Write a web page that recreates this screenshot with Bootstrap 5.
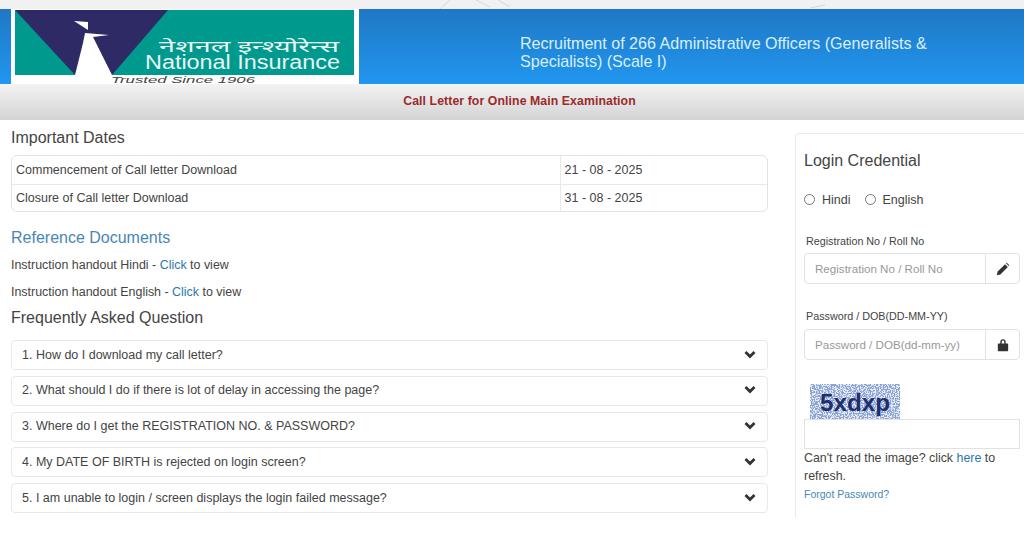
<!DOCTYPE html>
<html lang="en"><head><meta charset="utf-8"><title>Call Letter</title>
<link rel="stylesheet" href="https://cdn.jsdelivr.net/npm/bootstrap@5.3.0/dist/css/bootstrap.min.css">
<style>
html,body{height:536px;overflow:hidden}
body{font-family:"Liberation Sans",Arial,sans-serif;color:#444;background:#fff;font-size:13px}
.topstrip{height:9px;background:#f1f1f1;overflow:hidden}
.topstrip svg{display:block}
.hdr{height:75px;background:linear-gradient(#1f78c4,#2196f0)}
.logobox{width:348px;margin-left:11px;background:#fff;padding:1px 4px 0;flex:none;height:75px}
.logosvg{display:block;width:339px;height:74px;overflow:visible}
.hdrtitle{margin-left:161px;width:470px;color:#d8f0fb;font-size:16.1px;line-height:18px;padding-top:11px}
.band{height:36px;background:linear-gradient(#f3f3f3,#d4d4d4);color:#9c2a2a;font-weight:700;font-size:12.25px;letter-spacing:.1px;padding:0 0 2px 15px}
.leftcol{width:757px;margin-left:11px;flex:none}
.rightcol{width:229px;margin:13px 0 0 27px;flex:none;height:384px;border:1px solid #e9e9e9;border-right:0;border-bottom:0;border-radius:4px 0 0 0;padding:15px 4px 0 8px}
.h-dates{font-size:16px;line-height:18px;color:#444;margin:9px 0 8px;font-weight:400}
.datebox{border:1px solid #e2e2e2;border-radius:6px;height:57px;overflow:hidden}
.datebox .table{margin:0;--bs-table-color:#444;font-size:12.5px}
.datebox td{padding:0 4px;height:28px;vertical-align:middle;border-color:#e8e8e8;color:#444}
.datebox tr:first-child td{padding-top:1px}
.datebox tr:last-child td{border-bottom:0}
.c1{width:548px;border-right:1px solid #e8e8e8}
.h-ref{font-size:16px;line-height:18px;color:#4a86b4;margin:17px 0 0;font-weight:400}
.reftext{font-size:12.45px;line-height:14px;margin:13px 0 0;color:#444}
.reftext.first{margin-top:11px}
.linkb{color:#2b78ad;text-decoration:none}
.h-faq{font-size:16px;line-height:18px;color:#444;margin:10px 0 13px;font-weight:400}
.faqs{gap:5.75px}
.faq{height:30px;border:1px solid #e8e8e8;border-radius:4px;padding:0 11px 0 10px;font-size:12.5px;color:#444}
.faq svg{width:12px;height:9px;flex:none;margin-top:-2px}
.h-login{font-size:16px;line-height:18px;margin:3px 0 23px;font-weight:400;color:#444}
.langs{font-size:12.5px;line-height:14px;gap:14px;margin-bottom:28px}
.radiodot{width:11px;height:11px;border:1px solid #777;border-radius:50%;background:#fff;display:inline-block;margin-right:7px;vertical-align:-1px}
.fldlabel{font-size:10.75px;line-height:12px;margin:0 0 7px 2px;color:#444}
.fldlabel.tight{margin-bottom:6px}
.fldgroup{height:31px;width:216px;margin-bottom:25px}
.fldgroup.loose{margin-bottom:26px}
.fldgroup .form-control{font-size:11.6px;border-color:#e2e2e2;border-radius:4px 0 0 4px;padding:0 10px;height:31px;color:#444;box-shadow:none}
.fldgroup .form-control::placeholder{color:#999}
.fldgroup .input-group-text{width:35px;justify-content:center;background:#fff;border-color:#e2e2e2;padding:0;border-radius:0 4px 4px 0;margin-left:-1px}
.fldgroup svg{width:14px;height:14px}
.captcha{display:block;width:90px;height:35px;margin:-1px 0 0 6px}
.captchain{width:216px;height:30px;border:1px solid #e2e2e2;display:block}
.refresh{font-size:12.4px;line-height:18px;margin:0;color:#444}
.forgot{font-size:10.5px;line-height:14px;color:#4a86b4;text-decoration:none;display:block;margin-top:2px}
</style></head><body>
<div class="topstrip"><svg width="1024" height="9" viewBox="0 0 1024 9" fill="none" stroke="#d6d6d6"><path d="M440 9L450 0M476 0L490 7M498 0L510 7M810 8L825 5"/></svg></div>
<div class="hdr d-flex">
 <div class="logobox">
  <svg class="logosvg" viewBox="0 0 339 74" role="img" aria-label="National Insurance">
   <rect width="339" height="65" fill="#00998e"/>
   <polygon points="0,0 153,0 97,65 60,65" fill="#2e2a66"/>
   <polygon points="60,65 68,33 70,23 94,25 78,27 97,65" fill="#fff"/>
   <polygon points="59,11 73,12 73,20" fill="#fff"/>
   <text x="144" y="42" fill="#e8f5f3" font-size="16" font-family="'Noto Sans','Liberation Sans',sans-serif" textLength="180" lengthAdjust="spacingAndGlyphs">नेशनल इन्श्योरेन्स</text>
   <text x="130" y="59" fill="#e8f5f3" font-size="19.5" font-family="'Liberation Sans',sans-serif" textLength="195" lengthAdjust="spacingAndGlyphs">National Insurance</text>
   <text x="96" y="73" fill="#444" font-size="8.5" font-style="italic" font-family="'Liberation Sans',sans-serif" textLength="144" lengthAdjust="spacingAndGlyphs">Trusted Since 1906</text>
  </svg>
 </div>
 <div class="hdrtitle d-flex align-items-center">Recruitment of 266 Administrative Officers (Generalists &amp; Specialists) (Scale I)</div>
</div>
<div class="band d-flex align-items-center justify-content-center">Call Letter for Online Main Examination</div>
<div class="d-flex">
 <div class="leftcol">
  <h2 class="h-dates">Important Dates</h2>
  <div class="datebox"><table class="table"><tbody>
   <tr><td class="c1">Commencement of Call letter Download</td><td>21 - 08 - 2025</td></tr>
   <tr><td class="c1">Closure of Call letter Download</td><td>31 - 08 - 2025</td></tr>
  </tbody></table></div>
  <h2 class="h-ref">Reference Documents</h2>
  <p class="reftext first">Instruction handout Hindi - <a class="linkb" href="#">Click</a> to view</p>
  <p class="reftext">Instruction handout English - <a class="linkb" href="#">Click</a> to view</p>
  <h2 class="h-faq">Frequently Asked Question</h2>
  <div class="faqs d-flex flex-column">
   <div class="faq d-flex align-items-center justify-content-between"><span>1. How do I download my call letter?</span><svg viewBox="0 0 12 9"><path d="M1.5 2L6 6.5L10.5 2" fill="none" stroke="#333" stroke-width="2.8"/></svg></div>
   <div class="faq d-flex align-items-center justify-content-between"><span>2. What should I do if there is lot of delay in accessing the page?</span><svg viewBox="0 0 12 9"><path d="M1.5 2L6 6.5L10.5 2" fill="none" stroke="#333" stroke-width="2.8"/></svg></div>
   <div class="faq d-flex align-items-center justify-content-between"><span>3. Where do I get the REGISTRATION NO. &amp; PASSWORD?</span><svg viewBox="0 0 12 9"><path d="M1.5 2L6 6.5L10.5 2" fill="none" stroke="#333" stroke-width="2.8"/></svg></div>
   <div class="faq d-flex align-items-center justify-content-between"><span>4. My DATE OF BIRTH is rejected on login screen?</span><svg viewBox="0 0 12 9"><path d="M1.5 2L6 6.5L10.5 2" fill="none" stroke="#333" stroke-width="2.8"/></svg></div>
   <div class="faq d-flex align-items-center justify-content-between"><span>5. I am unable to login / screen displays the login failed message?</span><svg viewBox="0 0 12 9"><path d="M1.5 2L6 6.5L10.5 2" fill="none" stroke="#333" stroke-width="2.8"/></svg></div>
  </div>
 </div>
 <div class="rightcol">
  <h2 class="h-login">Login Credential</h2>
  <div class="langs d-flex"><span><span class="radiodot"></span>Hindi</span><span><span class="radiodot"></span>English</span></div>
  <div class="fldlabel tight">Registration No / Roll No</div>
  <div class="input-group fldgroup loose flex-nowrap"><input class="form-control" placeholder="Registration No / Roll No"><span class="input-group-text"><svg viewBox="0 0 13 13"><path d="M.8 12.2l.7-3.3L8.4 2l2.6 2.6-6.9 6.9zM9.2 1.2l.8-.6 2.4 2.4-.6.8z" fill="#333"/></svg></span></div>
  <div class="fldlabel">Password / DOB(DD-MM-YY)</div>
  <div class="input-group fldgroup flex-nowrap"><input class="form-control" placeholder="Password / DOB(dd-mm-yy)"><span class="input-group-text"><svg viewBox="0 0 13 13"><path d="M4 5V3.6a2.5 2.5 0 0 1 5 0V5h1.6c.4 0 .7.3.7.7v6c0 .4-.3.7-.7.7H2.400c-.4 0-.7-.3-.7-.7v-6c0-.4.3-.7.7-.7zm1.300 0h2.400V3.600a1.200 1.200 0 0 0-2.400 0z" fill="#333"/></svg></span></div>
  <svg class="captcha" viewBox="0 0 90 35" role="img" aria-label="Captcha image">
   <defs><filter id="specks" x="0" y="0" width="100%" height="100%"><feTurbulence type="fractalNoise" baseFrequency="0.75" numOctaves="2" seed="7"/><feColorMatrix type="matrix" values="0 0 0 0 0.25  0 0 0 0 0.36  0 0 0 0 0.66  0 0 0 9 -3.9"/></filter></defs>
   <rect width="90" height="35" fill="#e6ebf5"/>
   <rect width="90" height="35" filter="url(#specks)"/>
   <text x="10" y="27" fill="#1f2f6e" font-size="23" font-weight="700" font-family="'Liberation Sans',sans-serif" textLength="70" lengthAdjust="spacingAndGlyphs">5xdxp</text>
  </svg>
  <input class="captchain" aria-label="Captcha">
  <p class="refresh">Can't read the image? click <a class="linkb" href="#">here</a> to refresh.</p>
  <a class="forgot" href="#">Forgot Password?</a>
 </div>
</div>
<script src="https://cdn.jsdelivr.net/npm/bootstrap@5.3.0/dist/js/bootstrap.bundle.min.js"></script>
</body></html>
